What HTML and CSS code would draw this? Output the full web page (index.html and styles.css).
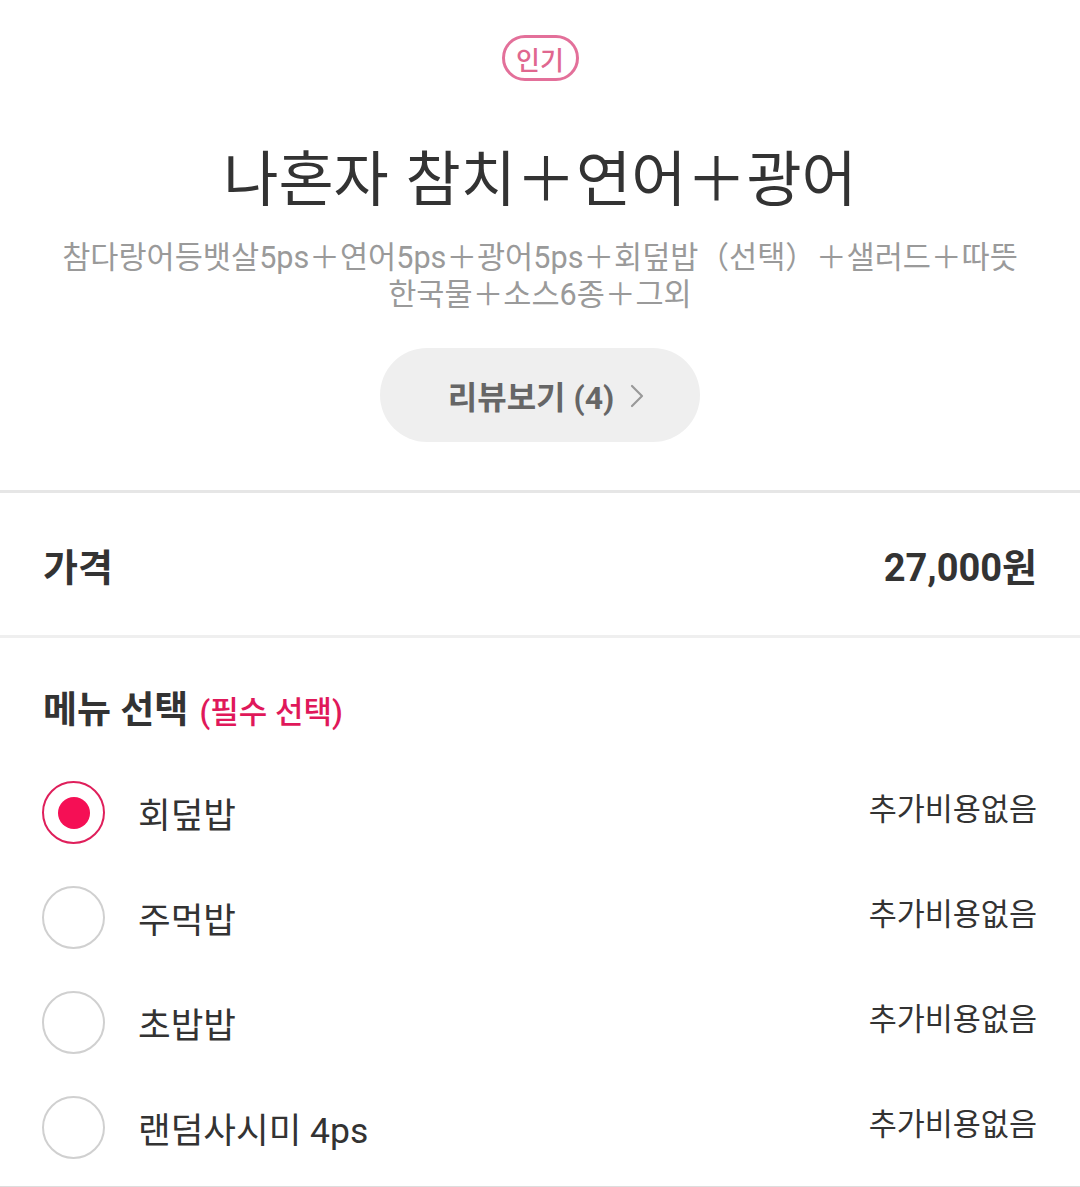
FILE: index.html
```html
<!DOCTYPE html>
<html lang="ko">
<head>
<meta charset="utf-8">
<link rel="stylesheet" href="styles.css">
</head>
<body>
<div class="page">
  <header class="head">
    <span class="badge">인기</span>
    <h1 class="title">나혼자 참치＋연어＋광어</h1>
    <p class="desc">참다랑어등뱃살5ps＋연어5ps＋광어5ps＋회덮밥（선택）＋샐러드＋따뜻<br>한국물＋소스6종＋그외</p>
    <button class="review">리뷰보기 (4)
      <svg class="chev" width="14" height="24" viewBox="0 0 14 24"><path d="M2 2 L12 12 L2 22" fill="none" stroke="#999" stroke-width="2.2" stroke-linecap="round" stroke-linejoin="round"/></svg>
    </button>
  </header>
  <section class="price">
    <span class="price-label">가격</span>
    <span class="price-value">27,000원</span>
  </section>
  <section class="options">
    <h2 class="opt-title">메뉴 선택 <span class="req">(필수 선택)</span></h2>
    <ul class="opt-list">
      <li class="opt"><span class="radio on"></span><span class="opt-name">회덮밥</span><span class="opt-extra">추가비용없음</span></li>
      <li class="opt"><span class="radio"></span><span class="opt-name">주먹밥</span><span class="opt-extra">추가비용없음</span></li>
      <li class="opt"><span class="radio"></span><span class="opt-name">초밥밥</span><span class="opt-extra">추가비용없음</span></li>
      <li class="opt"><span class="radio"></span><span class="opt-name">랜덤사시미 4ps</span><span class="opt-extra">추가비용없음</span></li>
    </ul>
  </section>
</div>
</body>
</html>
```
FILE: styles.css
```css
* { box-sizing: border-box; }
html, body { margin: 0; padding: 0; background: #fff; }
body {
  font-family: Roboto, "Noto Sans CJK KR", sans-serif;
  color: #333;
}
.page { width: 1080px; }
.head {
  display: flex;
  flex-direction: column;
  align-items: center;
  padding-top: 35px;
  padding-bottom: 48px;
  border-bottom: 3px solid #e6e6e6;
}
.badge {
  display: inline-flex;
  align-items: center;
  justify-content: center;
  width: 77px;
  height: 46px;
  border: 3px solid #e3709a;
  border-radius: 23px;
  color: #e0678f;
  font-size: 26px;
  font-weight: 500;
  font-family: "Noto Sans CJK KR", sans-serif;
}
.title {
  margin: 56px 0 0;
  font-family: "Noto Sans CJK KR", sans-serif;
  font-size: 60px;
  font-weight: 400;
  line-height: 76px;
  color: #333;
}
.desc {
  margin: 26px 0 0;
  text-align: center;
  font-size: 30.6px;
  line-height: 37px;
  color: #9a9a9a;
  padding: 0 40px;
}
.review {
  margin-top: 35px;
  width: 320px;
  height: 94px;
  border: 0;
  border-radius: 47px;
  background: #efefef;
  color: #666;
  font-family: Roboto, "Noto Sans CJK KR", sans-serif;
  font-size: 32px;
  font-weight: 700;
  display: flex;
  align-items: center;
  justify-content: center;
  gap: 16px;
  padding: 0 0 0 12px;
}
.chev { margin-top: 2px; }
.price {
  display: flex;
  justify-content: space-between;
  align-items: center;
  height: 145px;
  padding: 0 43px 0 43px;
  border-bottom: 3px solid #efefef;
}
.price-label, .price-value {
  font-size: 38px;
  font-weight: 700;
  color: #333;
}
.options { padding: 48px 0 0; }
.opt-title {
  margin: 0;
  padding: 0 43px;
  font-size: 37px;
  font-weight: 700;
  line-height: 50px;
  color: #333;
}
.req {
  margin-left: 2px;
  font-size: 31px;
  font-weight: 500;
  color: #e0185a;
}
.opt-list {
  list-style: none;
  margin: 22px 0 0;
  padding: 0 0 6px;
  border-bottom: 2px solid #ddd;
}
.opt {
  display: flex;
  align-items: center;
  height: 105px;
  padding: 0 43px 0 42px;
}
.radio {
  width: 63px;
  height: 63px;
  border-radius: 50%;
  border: 2.5px solid #d0d0d0;
  display: flex;
  align-items: center;
  justify-content: center;
  flex: none;
}
.radio.on { border-color: #df1f5b; }
.radio.on::after {
  content: "";
  width: 32px;
  height: 32px;
  border-radius: 50%;
  background: #f50f55;
}
.opt-name {
  margin-left: 33px;
  font-size: 35.5px;
  color: #333;
  flex: 1;
}
.opt-extra {
  font-size: 30.5px;
  color: #333;
  margin-top: -12px;
}
```
